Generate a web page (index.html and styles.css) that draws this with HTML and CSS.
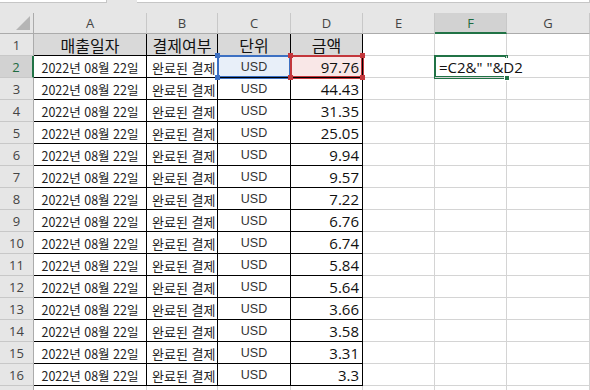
FILE: index.html
```html
<!DOCTYPE html>
<html lang="ko">
<head>
<meta charset="utf-8">
<link rel="stylesheet" href="styles.css">
</head>
<body>
<div class="topbar">
  <div class="box box-name"></div>
  <div class="box box-mid"></div>
  <div class="box box-formula"></div>
</div>
<div class="sheet">
  <div class="corner"><span class="tri"></span></div>
  <div class="ch">A</div><div class="ch">B</div><div class="ch">C</div><div class="ch">D</div><div class="ch">E</div><div class="ch sel">F</div><div class="ch">G</div>

  <div class="rh">1</div>
  <div class="c t th">매출일자</div><div class="c t th">결제여부</div><div class="c t th">단위</div><div class="c t th">금액</div><div class="c"></div><div class="c"></div><div class="c"></div>

  <div class="rh sel">2</div>
  <div class="c t date">2022년 08월 22일</div><div class="c t stat">완료된 결제</div>
  <div class="c t unit hl-blue">USD<i class="h tl"></i><i class="h tr"></i><i class="h bl"></i><i class="h br"></i></div>
  <div class="c t num hl-red">97.76<i class="h tl"></i><i class="h tr"></i><i class="h bl"></i><i class="h br"></i></div>
  <div class="c"></div>
  <div class="c active"><span class="editor">=C2&amp;" "&amp;D2</span><i class="fill"></i></div>
  <div class="c"></div>

  <div class="rh">3</div><div class="c t date">2022년 08월 22일</div><div class="c t stat">완료된 결제</div><div class="c t unit">USD</div><div class="c t num">44.43</div><div class="c"></div><div class="c"></div><div class="c"></div>
  <div class="rh">4</div><div class="c t date">2022년 08월 22일</div><div class="c t stat">완료된 결제</div><div class="c t unit">USD</div><div class="c t num">31.35</div><div class="c"></div><div class="c"></div><div class="c"></div>
  <div class="rh">5</div><div class="c t date">2022년 08월 22일</div><div class="c t stat">완료된 결제</div><div class="c t unit">USD</div><div class="c t num">25.05</div><div class="c"></div><div class="c"></div><div class="c"></div>
  <div class="rh">6</div><div class="c t date">2022년 08월 22일</div><div class="c t stat">완료된 결제</div><div class="c t unit">USD</div><div class="c t num">9.94</div><div class="c"></div><div class="c"></div><div class="c"></div>
  <div class="rh">7</div><div class="c t date">2022년 08월 22일</div><div class="c t stat">완료된 결제</div><div class="c t unit">USD</div><div class="c t num">9.57</div><div class="c"></div><div class="c"></div><div class="c"></div>
  <div class="rh">8</div><div class="c t date">2022년 08월 22일</div><div class="c t stat">완료된 결제</div><div class="c t unit">USD</div><div class="c t num">7.22</div><div class="c"></div><div class="c"></div><div class="c"></div>
  <div class="rh">9</div><div class="c t date">2022년 08월 22일</div><div class="c t stat">완료된 결제</div><div class="c t unit">USD</div><div class="c t num">6.76</div><div class="c"></div><div class="c"></div><div class="c"></div>
  <div class="rh">10</div><div class="c t date">2022년 08월 22일</div><div class="c t stat">완료된 결제</div><div class="c t unit">USD</div><div class="c t num">6.74</div><div class="c"></div><div class="c"></div><div class="c"></div>
  <div class="rh">11</div><div class="c t date">2022년 08월 22일</div><div class="c t stat">완료된 결제</div><div class="c t unit">USD</div><div class="c t num">5.84</div><div class="c"></div><div class="c"></div><div class="c"></div>
  <div class="rh">12</div><div class="c t date">2022년 08월 22일</div><div class="c t stat">완료된 결제</div><div class="c t unit">USD</div><div class="c t num">5.64</div><div class="c"></div><div class="c"></div><div class="c"></div>
  <div class="rh">13</div><div class="c t date">2022년 08월 22일</div><div class="c t stat">완료된 결제</div><div class="c t unit">USD</div><div class="c t num">3.66</div><div class="c"></div><div class="c"></div><div class="c"></div>
  <div class="rh">14</div><div class="c t date">2022년 08월 22일</div><div class="c t stat">완료된 결제</div><div class="c t unit">USD</div><div class="c t num">3.58</div><div class="c"></div><div class="c"></div><div class="c"></div>
  <div class="rh">15</div><div class="c t date">2022년 08월 22일</div><div class="c t stat">완료된 결제</div><div class="c t unit">USD</div><div class="c t num">3.31</div><div class="c"></div><div class="c"></div><div class="c"></div>
  <div class="rh">16</div><div class="c t date">2022년 08월 22일</div><div class="c t stat">완료된 결제</div><div class="c t unit">USD</div><div class="c t num">3.3</div><div class="c"></div><div class="c"></div><div class="c"></div>
  <div class="rh"></div><div class="c"></div><div class="c"></div><div class="c"></div><div class="c"></div><div class="c"></div><div class="c"></div><div class="c"></div>
</div>
</body>
</html>
```

FILE: styles.css
```css
* { box-sizing: border-box; }
html, body { margin: 0; padding: 0; }
body {
  width: 590px;
  height: 390px;
  overflow: hidden;
  background: #ffffff;
  font-family: "Noto Sans CJK KR", "Noto Sans", sans-serif;
  color: #000;
}

.topbar {
  height: 13px;
  background: #e6e6e6;
  display: flex;
  align-items: flex-start;
}
.box {
  height: 3px;
  background: #ffffff;
  border-bottom: 1px solid #c6c6c6;
  border-right: 1px solid #c6c6c6;
}
.box-name { width: 107px; }
.box-mid { width: 30px; background: #e6e6e6; border: none; }
.box-mid + .box-formula { flex: 1; }

.sheet {
  display: grid;
  grid-template-columns: 34px 113px 71px 73px 72px 72px 72px 83px;
  grid-template-rows: 21px;
  grid-auto-rows: 22px;
}

.corner {
  background: #e6e6e6;
  border-right: 1px solid #ababab;
  border-bottom: 1px solid #ababab;
  position: relative;
}
.tri {
  position: absolute;
  right: 3px;
  bottom: 3px;
  width: 0;
  height: 0;
  border-left: 14px solid transparent;
  border-bottom: 14px solid #b5b5b5;
}

.ch {
  background: #e6e6e6;
  border-right: 1px solid #c8c8c8;
  border-bottom: 1px solid #ababab;
  display: flex;
  align-items: center;
  justify-content: center;
  font-family: "Open Sans", "Noto Sans", sans-serif;
  font-size: 13px;
  color: #444;
}
.ch.sel {
  background: #d2d2d2;
  border-bottom: 2px solid #217346;
  color: #1e6b41;
}

.rh {
  background: #e6e6e6;
  border-right: 1px solid #ababab;
  border-bottom: 1px solid #c8c8c8;
  display: flex;
  align-items: center;
  justify-content: center;
  font-family: "Open Sans", "Noto Sans", sans-serif;
  font-size: 13px;
  color: #444;
  padding-top: 1px;
}
.rh.sel {
  background: #d2d2d2;
  border-right: 2px solid #217346;
  color: #1e6b41;
}

.c {
  border-right: 1px solid #d4d4d4;
  border-bottom: 1px solid #d4d4d4;
  display: flex;
  align-items: center;
  white-space: nowrap;
  overflow: hidden;
  position: relative;
  font-size: 13px;
  color: #222;
}
.c.t {
  border-right-color: #000;
  border-bottom-color: #000;
}
.th {
  background: #d9d9d9;
  justify-content: center;
  font-size: 16px;
  color: #111;
}
.date { justify-content: center; padding-top: 1px; font-size: 12.5px; }
.stat { padding-left: 5px; padding-top: 1px; }
.unit {
  justify-content: center;
  font-family: "Liberation Sans", Arial, sans-serif;
  font-size: 12.5px;
  color: #333;
  padding-top: 1px;
}
.num {
  justify-content: flex-end;
  padding-right: 3px;
  font-family: "Open Sans", "Noto Sans", sans-serif;
  font-size: 15px;
  color: #111;
  padding-top: 1px;
}

.hl-blue, .hl-red { overflow: visible; z-index: 2; }
.hl-blue { background: #e8eff9; box-shadow: 0 0 0 1px #3d70c2, inset 0 0 0 1px #3d70c2; }
.hl-red { background: #f9e7e7; box-shadow: 0 0 0 1px #c3373c, inset 0 0 0 1px #c3373c; }
.h {
  position: absolute;
  width: 5px;
  height: 5px;
}
.hl-blue .h { background: #3d70c2; }
.hl-red .h { background: #c3373c; }
.h.tl { left: -3px; top: -3px; }
.h.tr { right: -3px; top: -3px; }
.h.bl { left: -3px; bottom: -3px; }
.h.br { right: -3px; bottom: -3px; }

.active {
  overflow: visible;
  z-index: 3;
  box-shadow: 0 0 0 1px #217346, inset 0 0 0 1px #217346;
}
.editor {
  position: absolute;
  left: 2px;
  top: 2px;
  bottom: 2px;
  padding: 1px 6px 0 2px;
  background: #fff;
  display: flex;
  align-items: center;
  font-family: "Open Sans", "Noto Sans", sans-serif;
  font-size: 15px;
  color: #111;
  white-space: nowrap;
}
.fill {
  position: absolute;
  right: -4px;
  bottom: -4px;
  width: 6px;
  height: 6px;
  background: #217346;
  border: 1px solid #fff;
}
```
